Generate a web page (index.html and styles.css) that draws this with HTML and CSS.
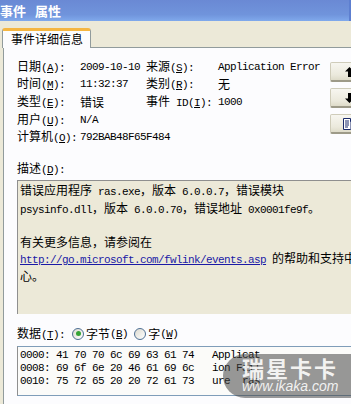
FILE: index.html
```html
<!DOCTYPE html>
<html lang="zh-CN">
<head>
  <meta charset="UTF-8" />
  <title>事件 属性</title>
  <link rel="stylesheet" href="styles.css">
</head>
<body>

  <div class="titlebar"><span>事件</span><span>属性</span></div>

  <div class="tabs">
    <div class="tab">事件详细信息</div>
  </div>

  <div class="page">
    <div class="top">
      <div class="fields">
        <div>日期<span class="m">(<u>A</u>):</span></div>
        <div class="m">2009-10-10</div>
        <div>来源<span class="m">(<u>S</u>):</span></div>
        <div class="m">Application Error</div>

        <div>时间<span class="m">(<u>M</u>):</span></div>
        <div class="m">11:32:37</div>
        <div>类别<span class="m">(<u>R</u>):</span></div>
        <div>无</div>

        <div>类型<span class="m">(<u>E</u>):</span></div>
        <div>错误</div>
        <div>事件<span class="m"> ID(<u>I</u>):</span></div>
        <div class="m">1000</div>

        <div>用户<span class="m">(<u>U</u>):</span></div>
        <div class="m">N/A</div>
        <div></div>
        <div></div>

        <div>计算机<span class="m">(<u>O</u>):</span></div>
        <div class="m">792BAB48F65F484</div>
        <div></div>
        <div></div>
      </div>

      <div class="btns">
        <button class="btn" type="button" aria-label="上一个">
          <svg width="9" height="10" viewBox="0 0 9 10"><path d="M4.5 0 L9 4.5 H6 V10 H3 V4.5 H0 Z" fill="#000"/></svg>
        </button>
        <button class="btn" type="button" aria-label="下一个">
          <svg width="9" height="10" viewBox="0 0 9 10"><path d="M4.5 10 L9 5.5 H6 V0 H3 V5.5 H0 Z" fill="#000"/></svg>
        </button>
        <button class="btn" type="button" aria-label="复制">
          <svg width="12" height="12" viewBox="0 0 12 12">
            <path d="M0.5 0.5 H7.5 V11.5 H0.5 Z" fill="#fff" stroke="#1a2a6a"/>
            <path d="M2 3 H6 M2 5 H6 M2 7 H6 M2 9 H5" stroke="#1a2a6a"/>
            <path d="M7.5 3.5 H11.5 V11.5 H7.5" fill="#fff" stroke="#1a2a6a"/>
          </svg>
        </button>
      </div>
    </div>

    <div class="label">描述<span class="m">(<u>D</u>):</span></div>
    <div class="desc">
      <div>错误应用程序<span class="m"> ras.exe</span>，版本<span class="m"> 6.0.0.7</span>，错误模块</div>
      <div><span class="m">psysinfo.dll</span>，版本<span class="m"> 6.0.0.70</span>，错误地址<span class="m"> 0x0001fe9f</span>。</div>
      <div>&nbsp;</div>
      <div>有关更多信息，请参阅在</div>
      <div><a class="m" href="#">http://go.microsoft.com/fwlink/events.asp</a><span class="m"> </span>的帮助和支持中</div>
      <div>心。</div>
    </div>

    <div class="datarow">
      <span>数据<span class="m">(<u>T</u>):</span></span>
      <label class="opt"><span class="radio on"></span>字节<span class="m">(<u>B</u>)</span></label>
      <label class="opt"><span class="radio"></span>字<span class="m">(<u>W</u>)</span></label>
    </div>
    <pre class="data">0000: 41 70 70 6c 69 63 61 74   Applicat
0008: 69 6f 6e 20 46 61 69 6c   ion Fail
0010: 75 72 65 20 20 72 61 73   ure  ras</pre>
  </div>

  <div class="mark">
    <div class="mark-cn">瑞星卡卡</div>
    <div class="mark-en">www.ikaka.com</div>
  </div>

</body>
</html>
```

FILE: styles.css
```css
/* Base */
* {
  box-sizing: border-box;
}
body {
  margin: 0;
  width: 351px;
  height: 404px;
  overflow: hidden;
  position: relative;
  background: #ece9d8;
  color: #000;
  font-family: "Noto Sans CJK SC", sans-serif;
  font-size: 12px;
  line-height: 16px;
}
.m {
  font-family: "Liberation Mono", monospace;
  font-size: 11px;
  letter-spacing: -0.6px;
}
u {
  text-decoration: underline;
}

/* Title bar */
.titlebar {
  height: 21px;
  display: flex;
  gap: 9px;
  align-items: center;
  padding-left: 0;
  background: linear-gradient(#6a89d4, #7094dc 70%, #80a9ec);
  color: #fff;
  font-weight: 700;
  font-size: 13px;
  border-right: 2px solid #5d7fd0;
}

/* Tabs */
.tabs {
  height: 26px;
  display: flex;
  align-items: flex-end;
  padding-left: 2px;
}
.tab {
  width: 89px;
  height: 20px;
  background: #fcfcfe;
  border: 1px solid #919b9c;
  border-bottom: none;
  border-top: 3px solid #f5b642;
  border-radius: 3px 3px 0 0;
  padding-left: 8px;
  line-height: 16px;
  position: relative;
  top: 1px;
}

/* Page */
.page {
  margin-left: 3px;
  width: 420px;
  height: 357px;
  background: #fcfcfe;
  border-top: 1px solid #919b9c;
  border-left: 1px solid #919b9c;
  padding: 10px 0 0 13px;
}
.top {
  display: flex;
}
.fields {
  display: grid;
  grid-template-columns: 63px 66px 72px 112px;
  grid-auto-rows: 17.6px;
  align-items: center;
  white-space: nowrap;
}
.btns {
  display: flex;
  flex-direction: column;
  gap: 6px;
  margin-top: 4px;
}
.btn {
  width: 38px;
  height: 20px;
  padding: 0;
  display: flex;
  align-items: center;
  justify-content: center;
  background: linear-gradient(#f7f6f0, #ebe9dc 70%, #dedbc9);
  border: 1px solid #cfccba;
  border-bottom: 2px solid #9d9a88;
  border-radius: 2px;
}

/* Description */
.label {
  margin-top: 14px;
}
.desc {
  margin-top: 2px;
  width: 400px;
  height: 134px;
  background: #ece9d8;
  border-top: 1px solid #8f8f8f;
  border-left: 1px solid #8f8f8f;
  padding: 1px 0 0 2px;
  white-space: nowrap;
}
.desc a {
  color: #1a1aa6;
  text-decoration: underline;
}

/* Data */
.datarow {
  margin-top: 11px;
  display: flex;
  align-items: center;
  white-space: nowrap;
}
.opt {
  display: flex;
  align-items: center;
  margin-left: 7px;
}
.opt + .opt {
  margin-left: 6px;
}
.radio {
  width: 12px;
  height: 12px;
  border-radius: 50%;
  border: 1px solid #4e6f93;
  background: linear-gradient(135deg, #dcdad0, #fff);
  margin-right: 2px;
  display: flex;
  align-items: center;
  justify-content: center;
}
.radio.on::after {
  content: "";
  width: 5px;
  height: 5px;
  border-radius: 50%;
  background: #36a336;
}
.data {
  margin: 3px 0 0;
  width: 400px;
  height: 50px;
  background: #fbfbf9;
  border-top: 1px solid #7f9db9;
  border-bottom: 1px solid #7f9db9;
  border-left: 1px solid #8f8f8f;
  padding: 2px 0 0 2px;
  font-family: "Liberation Mono", monospace;
  font-size: 11px;
  letter-spacing: -0.6px;
  line-height: 13px;
}

/* Watermark overlay */
.mark {
  position: absolute;
  left: 223px;
  top: 354px;
  width: 150px;
  height: 44px;
  border-radius: 22px;
  background: rgba(70, 70, 70, 0.55);
  color: rgba(255, 255, 255, 0.88);
  padding: 2px 0 0 19px;
}
.mark-cn {
  font-weight: 700;
  font-size: 22px;
  line-height: 22px;
  letter-spacing: 2px;
}
.mark-en {
  font-family: "Liberation Sans", sans-serif;
  font-style: italic;
  font-size: 14px;
  line-height: 16px;
}
```
